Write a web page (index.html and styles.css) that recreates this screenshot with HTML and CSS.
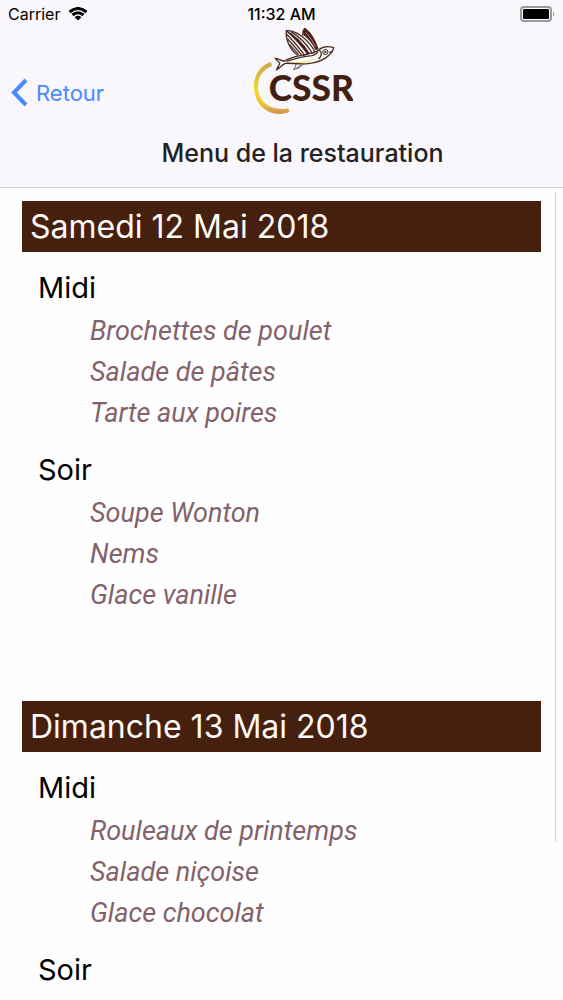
FILE: index.html
```html
<!DOCTYPE html>
<html lang="fr">
<head>
    <meta charset="utf-8">
    <meta name="viewport" content="width=device-width, initial-scale=1">
    <title>Menu de la restauration</title>
    <link rel="stylesheet" href="styles.css">
</head>
<body>
    <header class="header">
        <div class="status-bar">
            <div class="status-left">
                <span>Carrier</span>
                <svg class="wifi" viewBox="0 0 20 14" aria-hidden="true">
                    <path d="M1.5 5 Q10 -2 18.5 5" />
                    <path d="M4.5 8 Q10 3.4 15.5 8" />
                    <path class="wifi-dot" d="M6.6 10.2 Q10 7.4 13.4 10.2 L10 13.6 Z" />
                </svg>
            </div>
            <span class="clock">11:32 AM</span>
            <svg class="battery" viewBox="0 0 35 16" aria-hidden="true">
                <rect class="battery-case" x="1" y="1" width="30" height="14" rx="3" />
                <rect x="3" y="3" width="26" height="10" rx="1" />
                <path class="battery-tip" d="M33 5.5 Q35.5 8 33 10.5 Z" />
            </svg>
        </div>

        <div class="toolbar">
            <button class="back-btn" type="button">
                <svg class="chevron" viewBox="0 0 17 29" aria-hidden="true">
                    <path d="M15 2 L3 14.5 L15 27" />
                </svg>
                <span>Retour</span>
            </button>
            <div class="brand">
                <svg class="logo" viewBox="40 24 300 261" role="img" aria-label="CSSR">
                    <defs>
                        <linearGradient id="gold" x1="0" y1="0" x2="0" y2="1">
                            <stop offset="0" stop-color="#d2a04c" />
                            <stop offset="0.55" stop-color="#f0dc22" />
                            <stop offset="0.85" stop-color="#e6bd3c" />
                            <stop offset="1" stop-color="#c68f55" />
                        </linearGradient>
                    </defs>
                    <path fill="url(#gold)" d="M94 126 C62 136 42 164 43 202 C44 250 78 284 124 282 Q138 281 149 276 L146 265 Q136 268 120 266 C82 264 55 239 55 201 C55 170 70 148 97 139 Z" />
                    <!-- wings -->
                    <g class="ink">
                        <path d="M174 106 C151 89 137 59 140 32 C170 31 207 58 226 96" />
                        <path d="M140 32 Q172 59 204 101 M141 43 Q168 70 194 104 M143 56 Q164 78 185 104 M149 73 Q163 88 177 104 M153 35 Q190 56 216 96" />
                        <path d="M190 47 Q188 33 195 25 C212 37 226 61 235 88" />
                    </g>
                    <path class="ink-fill" d="M195 25 Q219 39 236 87 L227 90 Q214 62 192 46 Q188 33 195 25 Z M140 32 Q178 48 210 100 L202 102 Q175 60 140 32 Z" />
                    <path class="feather" d="M198 37 Q215 54 228 81" />
                    <!-- body -->
                    <path class="fish" d="M107 115 C119 116 126 124 135 123 C164 104 214 107 238 89 C253 77 272 80 282 83 C277 106 247 126 210 130 C180 135 155 128 137 130 C126 135 120 145 111 149 C114 139 121 134 120 129 C118 123 109 121 107 115 Z" />
                    <path class="belly" d="M150 126 Q190 130 230 115 Q191 135 150 126 Z" />
                    <path class="ink" d="M140 124 Q181 111 217 107 Q231 104 235 94 M239 90 Q252 104 236 117 M189 107 Q210 98 225 98 M269 98 L279 94" />
                    <path class="fin" d="M192 132 Q181 146 161 149 Q170 140 169 132 M184 134 L171 145" />
                    <circle class="eye" cx="257" cy="96" r="8" />
                    <circle class="ink-fill" cx="257" cy="96" r="3" />
                    <text class="logo-text" x="87" y="242">CSSR</text>
                </svg>
                <h1 class="title">Menu de la restauration</h1>
            </div>
        </div>
    </header>

    <main class="content">
        <div class="scroll-thumb"></div>

        <section class="day">
            <h2 class="day-title">Samedi 12 Mai 2018</h2>
            <h3 class="meal">Midi</h3>
            <ul class="dishes">
                <li>Brochettes de poulet</li>
                <li>Salade de pâtes</li>
                <li>Tarte aux poires</li>
            </ul>
            <h3 class="meal">Soir</h3>
            <ul class="dishes">
                <li>Soupe Wonton</li>
                <li>Nems</li>
                <li>Glace vanille</li>
            </ul>
        </section>

        <section class="day">
            <h2 class="day-title">Dimanche 13 Mai 2018</h2>
            <h3 class="meal">Midi</h3>
            <ul class="dishes">
                <li>Rouleaux de printemps</li>
                <li>Salade niçoise</li>
                <li>Glace chocolat</li>
            </ul>
            <h3 class="meal">Soir</h3>
        </section>
    </main>
</body>
</html>
```

FILE: styles.css
```css
* {
    box-sizing: border-box;
}

body {
    display: flex;
    flex-direction: column;
    height: 100vh;
    margin: 0;
    background: #fefefe;
    color: #000;
    font-family: Inter, "Liberation Sans", sans-serif;
}

h1, h2, h3, ul {
    margin: 0;
    padding: 0;
    font-weight: 400;
}

/* Header */
.header {
    flex: none;
    background: #f9f7fb;
    border-bottom: 1px solid #d3d2d6;
}

.status-bar {
    display: grid;
    grid-template-columns: 1fr auto 1fr;
    align-items: center;
    height: 28px;
    padding: 0 8px;
    font-size: 16px;
}

.status-left {
    display: flex;
    align-items: center;
    gap: 8px;
}

.wifi {
    width: 20px;
    height: 14px;
    fill: none;
    stroke: #000;
    stroke-width: 3;
}

.wifi-dot {
    fill: #000;
    stroke: none;
}

.clock {
    font-weight: 500;
}

.battery {
    justify-self: end;
    width: 35px;
    height: 16px;
}

.battery-case {
    fill: #fff;
    stroke: #99989b;
    stroke-width: 2;
}

.battery-tip {
    fill: #99989b;
}

.toolbar {
    display: grid;
    align-items: center;
}

.back-btn {
    grid-area: 1 / 1;
    z-index: 1;
    display: flex;
    align-items: center;
    justify-self: start;
    gap: 8px;
    margin: 0 0 30px 11px;
    padding: 0;
    border: 0;
    background: none;
    color: #488aff;
    font: inherit;
    font-size: 22px;
    cursor: pointer;
}

.chevron {
    width: 17px;
    height: 29px;
    fill: none;
    stroke: #488aff;
    stroke-width: 4;
}

.brand {
    grid-area: 1 / 1;
    display: flex;
    flex-direction: column;
    align-items: center;
    padding-left: 42px;
}

.title {
    padding: 20px 0 16px;
    color: #222224;
    font-size: 25px;
    font-weight: 500;
    line-height: 36px;
}

/* Logo */
.logo {
    width: 100px;
    height: 87px;
}

.logo-text {
    fill: #421f10;
    font-family: Lato, sans-serif;
    font-size: 106px;
    font-weight: 900;
}

.ink {
    fill: none;
    stroke: #4a2c22;
    stroke-width: 4;
}

.ink-fill {
    fill: #4a2018;
}

.feather {
    fill: none;
    stroke: #d9cdc8;
    stroke-width: 2;
}

.fish {
    fill: #fdfbfa;
    stroke: #4a2c22;
    stroke-width: 4;
}

.belly {
    fill: #f2d51c;
}

.fin {
    fill: none;
    stroke: #6d574c;
    stroke-width: 3;
}

.eye {
    fill: #d8d2cd;
    stroke: #55443d;
    stroke-width: 3;
}

/* Menu list */
.content {
    position: relative;
    flex: 1;
    min-height: 0;
    padding: 13px 22px 0;
    overflow: hidden;
}

.scroll-thumb {
    position: absolute;
    top: 4px;
    right: 7px;
    width: 1px;
    height: 80%;
    background: #d3d2d6;
}

.day {
    margin-bottom: 85px;
}

.day-title {
    padding: 0 8px;
    background: #45200f;
    color: #fffaf5;
    font-size: 32px;
    line-height: 51px;
}

.meal {
    padding: 12px 16px 0;
    font-size: 29px;
    line-height: 47px;
}

.dishes {
    padding-left: 68px;
    color: #83626a;
    font-family: Roboto, "Liberation Sans", sans-serif;
    font-size: 27px;
    font-style: italic;
    line-height: 41px;
    list-style: none;
}
```
